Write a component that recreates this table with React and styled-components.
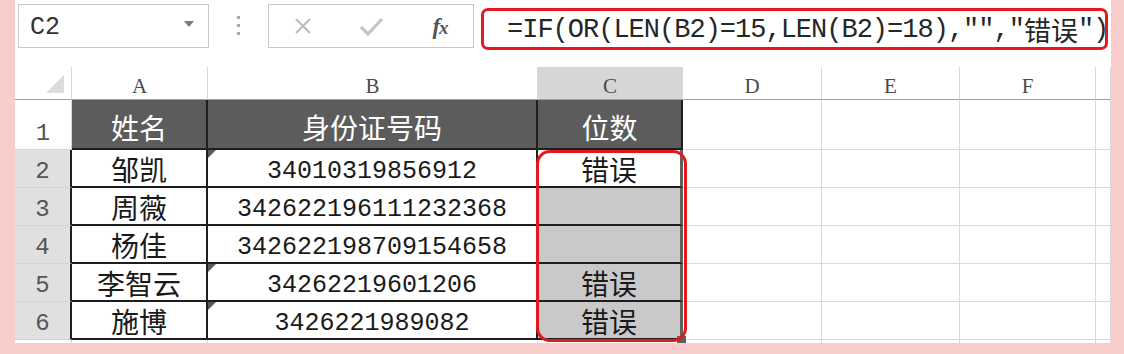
import React from "react";
import styled, { createGlobalStyle } from "styled-components";

const GlobalStyle = createGlobalStyle`
  html, body { margin: 0; padding: 0; }
  body {
    background: #f9cdcb;
    font-family: "Liberation Mono", "Noto Sans CJK SC", monospace;
  }
  * { box-sizing: border-box; }
`;

const MONO = `"Liberation Mono", "Noto Sans CJK SC", monospace`;
const CJK = `"Noto Sans CJK SC", "Noto Sans", sans-serif`;

const Frame = styled.div`
  width: 1124px;
  height: 354px;
  padding: 0 13px 11px 15px;
  background: #f9cdcb;
`;

const Sheet = styled.div`
  height: 343px;
  background: #ffffff;
  overflow: hidden;
  display: flex;
  flex-direction: column;
`;

/* ---------- formula toolbar ---------- */

const Toolbar = styled.div`
  height: 67px;
  flex: none;
  display: flex;
  align-items: flex-start;
  padding: 4px 3px 0 3px;
`;

const NameBox = styled.div`
  width: 191px;
  height: 44px;
  border: 1px solid #c9c9c9;
  display: flex;
  align-items: center;
  justify-content: space-between;
  padding: 2px 14px 0 11px;
  font-family: ${MONO};
  font-size: 25px;
  color: #333;
`;

const Caret = styled.span`
  width: 0;
  height: 0;
  border-left: 5px solid transparent;
  border-right: 5px solid transparent;
  border-top: 6px solid #7a7a7a;
  margin-bottom: 6px;
`;

const Grip = styled.div`
  width: 59px;
  height: 44px;
  display: flex;
  flex-direction: column;
  align-items: center;
  justify-content: center;
  gap: 5px;
  padding-bottom: 2px;
`;

const GripDot = styled.span`
  width: 3px;
  height: 3px;
  background: #a8a8a8;
`;

const ButtonBox = styled.div`
  width: 206px;
  height: 44px;
  border: 1px solid #c9c9c9;
  display: flex;
  align-items: center;
  padding-left: 24px;
`;

const IconSlot = styled.span`
  display: flex;
  align-items: center;
  justify-content: center;
  width: ${(p) => p.$w}px;
  margin-right: ${(p) => p.$gap || 0}px;
`;

const Fx = styled.span`
  font-family: "Liberation Serif", "DejaVu Serif", serif;
  font-style: italic;
  font-weight: bold;
  font-size: 23px;
  color: #555555;
  letter-spacing: -1px;
  line-height: 1;
  & > small {
    font-size: 19px;
  }
`;

const FormulaInput = styled.div`
  flex: 1;
  height: 42px;
  margin: 4px 0 0 7px;
  border: 3px solid #e3191d;
  border-radius: 7px;
  padding: 1px 0 0 23px;
  display: flex;
  align-items: center;
  white-space: nowrap;
  overflow: hidden;
  font-family: ${MONO};
  font-size: 27px;
  letter-spacing: -1px;
  color: #262626;
`;

const Wide = styled.span`
  font-family: ${CJK};
  font-size: 27px;
  letter-spacing: 0;
`;

/* ---------- worksheet grid ---------- */

const GridWrap = styled.div`
  position: relative;
  flex: 1;
`;

const Grid = styled.div`
  display: grid;
  grid-template-columns: 57px 136px 330px 145px 139px 138px 136px 1fr;
  grid-template-rows: 33px 50px repeat(5, 38px) 20px;
`;

const Corner = styled.div`
  display: flex;
  align-items: flex-end;
  justify-content: flex-end;
  padding: 0 7px 6px 0;
  border-right: 1px solid #d9d9d9;
  border-bottom: 1px solid #a3a3a3;
`;

const CornerMark = styled.span`
  width: 0;
  height: 0;
  border-left: 18px solid transparent;
  border-bottom: 18px solid #dcdcdc;
`;

const ColHead = styled.div`
  display: flex;
  align-items: flex-end;
  justify-content: center;
  padding-bottom: 0;
  background: ${(p) => (p.$selected ? "#d6d6d6" : "#ffffff")};
  border-right: 1px solid #d9d9d9;
  border-bottom: 1px solid #a3a3a3;
  font-family: "Liberation Serif", "DejaVu Serif", serif;
  font-size: 21px;
  color: #4a4a4a;
`;

const RowHead = styled.div`
  display: flex;
  align-items: flex-end;
  justify-content: center;
  padding-bottom: 2px;
  background: ${(p) => (p.$selected ? "#e0e0e0" : "#ffffff")};
  border-bottom: 1px solid #d4d4d4;
  border-right: ${(p) => (p.$edge ? "2px solid #1e1e1e" : "1px solid #d4d4d4")};
  font-family: ${MONO};
  font-size: 24px;
  color: #555;
`;

const TitleCell = styled.div`
  display: flex;
  align-items: center;
  justify-content: center;
  padding-top: 6px;
  background: #5c5c5c;
  border-right: 2px solid #1e1e1e;
  border-bottom: 2px solid #1e1e1e;
  font-family: ${CJK};
  font-size: 28px;
  line-height: 1;
  color: #ffffff;
`;

const DataCell = styled.div`
  position: relative;
  display: flex;
  align-items: center;
  justify-content: center;
  padding-top: ${(p) => (p.$digits ? 7 : 1)}px;
  background: ${(p) => (p.$shaded ? "#c9c9c9" : "#ffffff")};
  border-bottom: 2px solid #1e1e1e;
  border-right: ${(p) => (p.$selEdge ? "3px solid #616161" : "2px solid #1e1e1e")};
  font-family: ${(p) => (p.$digits ? MONO : CJK)};
  font-size: ${(p) => (p.$digits ? 25 : 28)}px;
  line-height: 1;
  color: #1a1a1a;
`;

const ErrorFlag = styled.span`
  position: absolute;
  top: 0;
  left: 0;
  width: 0;
  height: 0;
  border-top: 8px solid #5a5a5a;
  border-right: 8px solid transparent;
`;

const FillHandle = styled.span`
  position: absolute;
  right: -6px;
  bottom: -7px;
  width: 9px;
  height: 9px;
  background: #5e5e5e;
`;

const BlankCell = styled.div`
  background: #ffffff;
  border-right: ${(p) => (p.$edge ? "3px solid #616161" : "1px solid #dadada")};
  border-bottom: ${(p) => (p.$open ? "none" : "1px solid #dadada")};
`;

const Callout = styled.div`
  position: absolute;
  left: 521px;
  top: 83px;
  width: 151px;
  height: 192px;
  border: 3px solid #e3191d;
  border-radius: 14px;
  pointer-events: none;
`;

const columns = ["A", "B", "C", "D", "E", "F", ""];

const people = [
  { n: 2, name: "邹凯", id: "34010319856912", result: "错误", flag: true },
  { n: 3, name: "周薇", id: "342622196111232368", result: "", flag: false },
  { n: 4, name: "杨佳", id: "342622198709154658", result: "", flag: false },
  { n: 5, name: "李智云", id: "34262219601206", result: "错误", flag: true },
  { n: 6, name: "施博", id: "3426221989082", result: "错误", flag: true },
];

const trailing = [4, 5, 6, 7];

function CloseIcon() {
  return (
    <svg width="20" height="20" viewBox="0 0 20 20">
      <path d="M3 3 L17 17 M17 3 L3 17" stroke="#bdbdbd" strokeWidth="2.2" fill="none" />
    </svg>
  );
}

function CheckIcon() {
  return (
    <svg width="25" height="21" viewBox="0 0 25 21">
      <path d="M2 11 L9 18 L23 3" stroke="#c4c4c4" strokeWidth="3.2" fill="none" strokeLinejoin="round" />
    </svg>
  );
}

export default function App() {
  return (
    <>
      <GlobalStyle />
      <Frame>
        <Sheet>
          <Toolbar>
            <NameBox>
              <span>C2</span>
              <Caret />
            </NameBox>
            <Grip>
              <GripDot />
              <GripDot />
              <GripDot />
            </Grip>
            <ButtonBox>
              <IconSlot $w={20} $gap={46}>
                <CloseIcon />
              </IconSlot>
              <IconSlot $w={25} $gap={45}>
                <CheckIcon />
              </IconSlot>
              <IconSlot $w={22}>
                <Fx>
                  f<small>x</small>
                </Fx>
              </IconSlot>
            </ButtonBox>
            <FormulaInput>
              =IF(OR(LEN(B2)=15,LEN(B2)=18),″″,″<Wide>错误</Wide>″)
            </FormulaInput>
          </Toolbar>

          <GridWrap>
            <Grid>
              <Corner>
                <CornerMark />
              </Corner>
              {columns.map((c, i) => (
                <ColHead key={"h" + i} $selected={c === "C"}>
                  {c}
                </ColHead>
              ))}

              <RowHead>1</RowHead>
              <TitleCell>姓名</TitleCell>
              <TitleCell>身份证号码</TitleCell>
              <TitleCell>位数</TitleCell>
              {trailing.map((k) => (
                <BlankCell key={"t" + k} />
              ))}

              {people.map((p, idx) => (
                <React.Fragment key={p.n}>
                  <RowHead $selected $edge>
                    {p.n}
                  </RowHead>
                  <DataCell>{p.name}</DataCell>
                  <DataCell $digits>
                    {p.flag && <ErrorFlag />}
                    {p.id}
                  </DataCell>
                  <DataCell $shaded={idx > 0} $selEdge>
                    {p.result}
                    {idx === people.length - 1 && <FillHandle />}
                  </DataCell>
                  {trailing.map((k) => (
                    <BlankCell key={"r" + p.n + k} />
                  ))}
                </React.Fragment>
              ))}

              <RowHead $selected={false} />
              <BlankCell $open />
              <BlankCell $open />
              <BlankCell $open />
              {trailing.map((k) => (
                <BlankCell key={"e" + k} $open />
              ))}
            </Grid>
            <Callout />
          </GridWrap>
        </Sheet>
      </Frame>
    </>
  );
}
